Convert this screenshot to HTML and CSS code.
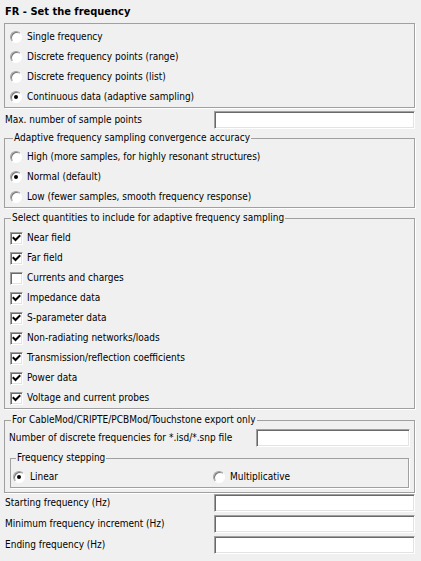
FILE: index.html
```html
<!DOCTYPE html>
<html>
<head>
<meta charset="utf-8">
<link rel="stylesheet" href="styles.css">
</head>
<body>
<div class="dialog">
  <div class="title">FR - Set the frequency</div>

  <fieldset class="group g-mode">
    <div class="opt"><span class="radio"></span><span>Single frequency</span></div>
    <div class="opt"><span class="radio"></span><span>Discrete frequency points (range)</span></div>
    <div class="opt"><span class="radio"></span><span>Discrete frequency points (list)</span></div>
    <div class="opt"><span class="radio on"></span><span>Continuous data (adaptive sampling)</span></div>
  </fieldset>

  <div class="field f-max"><span>Max. number of sample points</span><span class="input"></span></div>

  <fieldset class="group g-acc">
    <legend>Adaptive frequency sampling convergence accuracy</legend>
    <div class="opt"><span class="radio"></span><span>High (more samples, for highly resonant structures)</span></div>
    <div class="opt"><span class="radio on"></span><span>Normal (default)</span></div>
    <div class="opt"><span class="radio"></span><span>Low (fewer samples, smooth frequency response)</span></div>
  </fieldset>

  <fieldset class="group g-qty">
    <legend>Select quantities to include for adaptive frequency sampling</legend>
    <div class="opt chk-row"><span class="check on"><svg viewBox="0 0 13 13" width="13" height="13"><path d="M3.5 6 L5.5 8 L9.5 4" fill="none" stroke="#000" stroke-width="2" stroke-linecap="square"/></svg></span><span>Near field</span></div>
    <div class="opt chk-row"><span class="check on"><svg viewBox="0 0 13 13" width="13" height="13"><path d="M3.5 6 L5.5 8 L9.5 4" fill="none" stroke="#000" stroke-width="2" stroke-linecap="square"/></svg></span><span>Far field</span></div>
    <div class="opt chk-row"><span class="check"></span><span>Currents and charges</span></div>
    <div class="opt chk-row"><span class="check on"><svg viewBox="0 0 13 13" width="13" height="13"><path d="M3.5 6 L5.5 8 L9.5 4" fill="none" stroke="#000" stroke-width="2" stroke-linecap="square"/></svg></span><span>Impedance data</span></div>
    <div class="opt chk-row"><span class="check on"><svg viewBox="0 0 13 13" width="13" height="13"><path d="M3.5 6 L5.5 8 L9.5 4" fill="none" stroke="#000" stroke-width="2" stroke-linecap="square"/></svg></span><span>S-parameter data</span></div>
    <div class="opt chk-row"><span class="check on"><svg viewBox="0 0 13 13" width="13" height="13"><path d="M3.5 6 L5.5 8 L9.5 4" fill="none" stroke="#000" stroke-width="2" stroke-linecap="square"/></svg></span><span>Non-radiating networks/loads</span></div>
    <div class="opt chk-row"><span class="check on"><svg viewBox="0 0 13 13" width="13" height="13"><path d="M3.5 6 L5.5 8 L9.5 4" fill="none" stroke="#000" stroke-width="2" stroke-linecap="square"/></svg></span><span>Transmission/reflection coefficients</span></div>
    <div class="opt chk-row"><span class="check on"><svg viewBox="0 0 13 13" width="13" height="13"><path d="M3.5 6 L5.5 8 L9.5 4" fill="none" stroke="#000" stroke-width="2" stroke-linecap="square"/></svg></span><span>Power data</span></div>
    <div class="opt chk-row"><span class="check on"><svg viewBox="0 0 13 13" width="13" height="13"><path d="M3.5 6 L5.5 8 L9.5 4" fill="none" stroke="#000" stroke-width="2" stroke-linecap="square"/></svg></span><span>Voltage and current probes</span></div>
  </fieldset>

  <fieldset class="group g-exp">
    <legend>For CableMod/CRIPTE/PCBMod/Touchstone export only</legend>
    <div class="field f-num"><span>Number of discrete frequencies for *.isd/*.snp file</span><span class="input narrow"></span></div>
    <fieldset class="group g-step">
      <legend>Frequency stepping</legend>
      <div class="opt-row">
        <div class="opt half"><span class="radio on"></span><span>Linear</span></div>
        <div class="opt"><span class="radio"></span><span>Multiplicative</span></div>
      </div>
    </fieldset>
  </fieldset>

  <div class="field f-start"><span>Starting frequency (Hz)</span><span class="input"></span></div>
  <div class="field f-next"><span>Minimum frequency increment (Hz)</span><span class="input"></span></div>
  <div class="field f-next"><span>Ending frequency (Hz)</span><span class="input"></span></div>
</div>
</body>
</html>
```

FILE: styles.css
```css
html, body {
  margin: 0;
  background: #f0f0f0;
}
body {
  font-family: "DejaVu Sans Condensed", "Liberation Sans", sans-serif;
  font-size: 10px;
  line-height: 14px;
  color: #000;
}
.dialog {
  padding: 0 6px 0 4px;
}
.title {
  height: 23px;
  line-height: 24px;
  font-weight: bold;
  font-size: 11px;
  padding-left: 1px;
}
fieldset.group {
  margin: 0;
  min-width: 0;
  border: 1px solid #a0a0a0;
  box-shadow: 1px 1px 0 #fff;
  padding: 0 0 0 5px;
}
fieldset.group > legend {
  padding: 0 1px;
  line-height: 14px;
  height: 14px;
}
.opt {
  display: flex;
  align-items: center;
  height: 20px;
  gap: 5px;
  white-space: nowrap;
}
.chk-row {
  gap: 4px;
}
.radio {
  flex: none;
  position: relative;
  width: 12px;
  height: 12px;
  box-sizing: border-box;
  border-radius: 50%;
  background: #fff;
  border: 1px solid;
  border-color: #a0a0a0 #fff #fff #a0a0a0;
  box-shadow: inset 1px 1px 0 #777;
}
.radio.on::after {
  content: "";
  position: absolute;
  left: 3px;
  top: 3px;
  width: 4px;
  height: 4px;
  border-radius: 50%;
  background: #000;
}
.check {
  flex: none;
  width: 13px;
  height: 13px;
  box-sizing: border-box;
  background: #fff;
  border: 1px solid;
  border-color: #a0a0a0 #fff #fff #a0a0a0;
  box-shadow: inset 1px 1px 0 #696969, inset -1px -1px 0 #e3e3e3;
  position: relative;
}
.check svg {
  display: block;
  margin: -1px;
}
.field {
  display: flex;
  align-items: center;
  justify-content: space-between;
  height: 18px;
  padding-left: 1px;
  white-space: nowrap;
}
.input {
  flex: none;
  width: 201px;
  height: 18px;
  box-sizing: border-box;
  background: #fff;
  border: 1px solid;
  border-color: #a0a0a0 #fff #fff #a0a0a0;
  box-shadow: inset 1px 1px 0 #696969, inset -1px -1px 0 #e3e3e3;
}
.input.narrow {
  width: 154px;
  margin-right: -1px;
}
fieldset.g-mode {
  padding-top: 3px;
}
.f-max {
  margin-top: 3px;
}
fieldset.g-acc {
  margin-top: 2px;
  padding-top: 2px;
}
fieldset.g-acc > legend {
  margin-left: 3px;
}
fieldset.g-qty {
  margin-top: 3px;
  padding-top: 3px;
}
fieldset.g-qty > legend {
  margin-left: 1px;
}
fieldset.g-exp {
  margin-top: 4px;
  padding: 2px 5px 4px 5px;
}
fieldset.g-exp > legend {
  margin-left: 1px;
}
.f-num {
  margin-left: -2px;
}
fieldset.g-step {
  margin-top: 4px;
  padding: 2px 0 0 2px;
}
fieldset.g-step > legend {
  margin-left: 3px;
}
.opt-row {
  display: flex;
}
.opt.half {
  width: 200px;
}
.f-start {
  margin-top: 1px;
}
.f-next {
  margin-top: 3px;
}
```
